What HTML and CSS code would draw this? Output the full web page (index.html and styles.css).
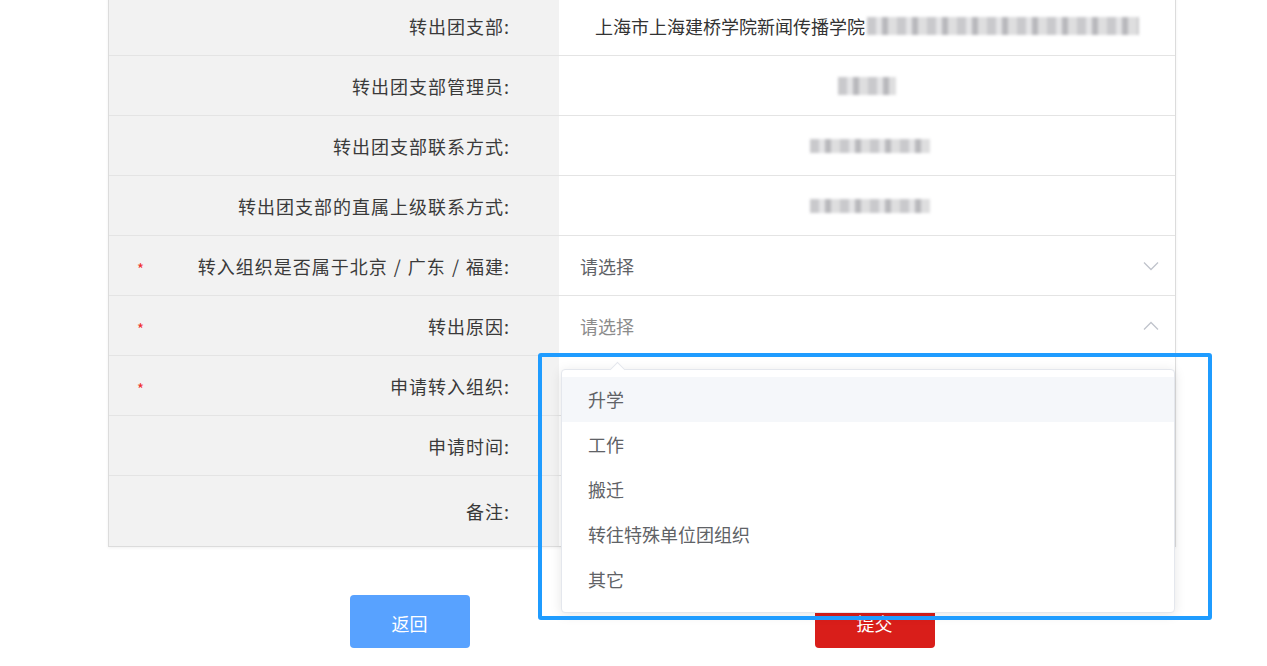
FILE: index.html
```html
<!DOCTYPE html>
<html lang="zh-CN">
<head>
  <meta charset="UTF-8">
  <title>团组织关系转接</title>
  <link rel="stylesheet" href="styles.css">
</head>
<body>
  <div class="page">
    <!-- 转接信息表 -->
    <div class="form">
      <div class="row">
        <div class="label"><span class="text">转出团支部:</span></div>
        <div class="value center">
          <span>上海市上海建桥学院新闻传播学院</span><span class="mask mask-long"></span>
        </div>
      </div>
      <div class="row">
        <div class="label"><span class="text">转出团支部管理员:</span></div>
        <div class="value center"><span class="mask mask-name"></span></div>
      </div>
      <div class="row">
        <div class="label"><span class="text">转出团支部联系方式:</span></div>
        <div class="value center"><span class="mask mask-phone"></span></div>
      </div>
      <div class="row">
        <div class="label"><span class="text">转出团支部的直属上级联系方式:</span></div>
        <div class="value center"><span class="mask mask-phone"></span></div>
      </div>
      <div class="row">
        <div class="label"><span class="star">*</span><span class="text">转入组织是否属于北京 / 广东 / 福建:</span></div>
        <div class="value select">
          <span class="placeholder">请选择</span>
          <svg class="arrow" width="16" height="10" viewBox="0 0 16 10"><polyline points="1,1.5 8,8.5 15,1.5" fill="none" stroke="#c0c4cc" stroke-width="1.3"/></svg>
        </div>
      </div>
      <div class="row">
        <div class="label"><span class="star">*</span><span class="text">转出原因:</span></div>
        <div class="value select open">
          <span class="placeholder light">请选择</span>
          <svg class="arrow" width="16" height="10" viewBox="0 0 16 10"><polyline points="1,8.5 8,1.5 15,8.5" fill="none" stroke="#c0c4cc" stroke-width="1.3"/></svg>
          <!-- 下拉菜单 -->
          <ul class="dropdown">
            <li class="hover">升学</li>
            <li>工作</li>
            <li>搬迁</li>
            <li>转往特殊单位团组织</li>
            <li>其它</li>
          </ul>
        </div>
      </div>
      <div class="row">
        <div class="label"><span class="star">*</span><span class="text">申请转入组织:</span></div>
        <div class="value"></div>
      </div>
      <div class="row">
        <div class="label"><span class="text">申请时间:</span></div>
        <div class="value"></div>
      </div>
      <div class="row row-tall">
        <div class="label"><span class="text">备注:</span></div>
        <div class="value"></div>
      </div>
    </div>

    <div class="actions">
      <button class="btn btn-back">返回</button>
      <button class="btn btn-submit">提交</button>
    </div>
  </div>

  <!-- 标注框 -->
  <div class="highlight"></div>
</body>
</html>
```

FILE: styles.css
```css
:root {
  --border: #e4e4e4;
  --label-bg: #f2f2f2;
  --text: #333;
}

body {
  margin: 0;
  background: #fff;
  font-family: "Noto Sans CJK SC", "Noto Sans", sans-serif;
  color: var(--text);
  overflow: hidden;
}

.page {
  padding-left: 108px;
}

.form {
  width: 1068px;
  box-sizing: border-box;
  margin-top: -4px;
  border: 1px solid #dcdcdc;
  border-top: none;
  box-shadow: 0 1px 3px rgba(0, 0, 0, 0.06);
}

.row {
  display: grid;
  grid-template-columns: 450px 1fr;
  height: 60px;
  box-sizing: border-box;
  border-bottom: 1px solid var(--border);
}

.row:last-child {
  border-bottom: none;
}

.row-tall {
  height: 70px;
}

.label {
  background: var(--label-bg);
  display: flex;
  align-items: center;
  padding: 0 49px 0 28px;
  font-size: 18px;
  color: #3a3a3a;
}

.label .text {
  margin-left: auto;
  white-space: nowrap;
  letter-spacing: 1px;
  word-spacing: 1px;
}

.star {
  color: #f0302c;
  font-size: 15px;
  padding-top: 6px;
}

.value {
  position: relative;
  display: flex;
  align-items: center;
  font-size: 18px;
}

.value.center {
  justify-content: center;
}

.mask {
  display: inline-block;
  height: 18px;
  filter: blur(1.6px);
  background: repeating-linear-gradient(90deg, #c9c9cc 0 9px, #e4e4e6 9px 15px, #b8b8bc 15px 21px, #dededf 21px 30px);
}

.mask-long {
  width: 272px;
  margin-left: 2px;
}

.mask-name {
  width: 58px;
}

.mask-phone {
  width: 120px;
  height: 14px;
  margin-left: 6px;
}

.select {
  justify-content: space-between;
  padding: 0 16px 0 21px;
}

.placeholder {
  color: #606266;
}

.placeholder.light {
  color: #8c8c8c;
}

.arrow {
  display: block;
}

.dropdown {
  position: absolute;
  top: calc(100% + 14px);
  left: 2px;
  right: 0;
  z-index: 10;
  margin: 0;
  padding: 7px 0 10px;
  list-style: none;
  background: #fff;
  border: 1px solid #e4e7ed;
  border-radius: 4px;
  box-shadow: 0 2px 12px rgba(0, 0, 0, 0.1);
}

.dropdown::before {
  content: "";
  position: absolute;
  top: -6px;
  left: 50px;
  width: 10px;
  height: 10px;
  background: #fff;
  border-top: 1px solid #e4e7ed;
  border-left: 1px solid #e4e7ed;
  transform: rotate(45deg);
}

.dropdown li {
  height: 45px;
  line-height: 45px;
  padding: 0 26px;
  font-size: 18px;
  color: #606266;
}

.dropdown li.hover {
  background: #f5f7fa;
}

.actions {
  width: 1068px;
  display: flex;
  justify-content: center;
  gap: 345px;
  margin-top: 48px;
}

.btn {
  width: 120px;
  height: 53px;
  border: none;
  border-radius: 4px;
  color: #fff;
  font-family: inherit;
  font-size: 18px;
  padding-top: 3px;
}

.btn-back {
  background: #58a2ff;
}

.btn-submit {
  background: #d91e1a;
}

.highlight {
  position: absolute;
  left: 538px;
  top: 353px;
  width: 674px;
  height: 267px;
  box-sizing: border-box;
  border: 4px solid #1f9cff;
  border-radius: 3px;
  z-index: 20;
  pointer-events: none;
}
```
